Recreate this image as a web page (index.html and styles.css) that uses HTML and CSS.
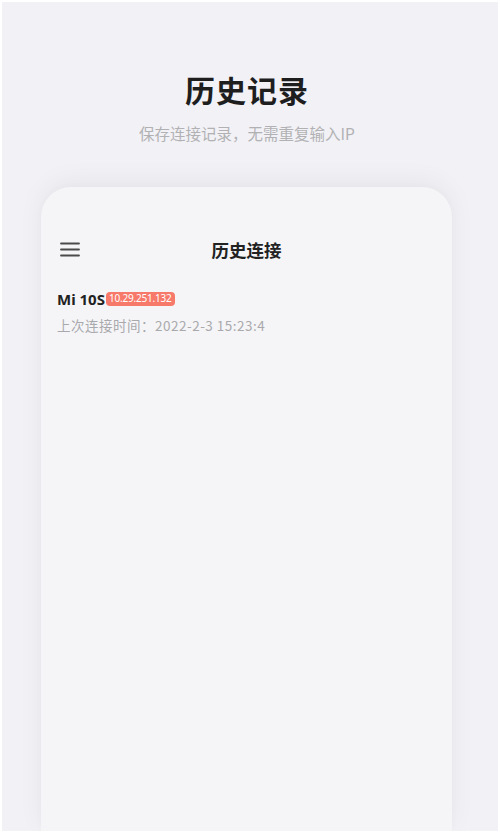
FILE: index.html
```html
<!DOCTYPE html>
<html lang="zh-CN">
<head>
<meta charset="utf-8">
<title>历史记录</title>
<link rel="stylesheet" href="styles.css">
</head>
<body>
<div class="screen">
  <header class="hero">
    <h1 class="hero-title">历史记录</h1>
    <p class="hero-sub">保存连接记录，无需重复输入IP</p>
  </header>
  <section class="card">
    <div class="toolbar">
      <svg class="menu" width="20" height="16" viewBox="0 0 20 16" aria-hidden="true">
        <path d="M1 2.5H19M1 8.5H19M1 14.5H19" stroke="#4a4a4a" stroke-width="1.8" stroke-linecap="round" fill="none"/>
      </svg>
      <div class="toolbar-title">历史连接</div>
    </div>
    <div class="item">
      <div class="item-head">
        <span class="device">Mi 10S</span>
        <span class="ip">10.29.251.132</span>
      </div>
      <div class="item-time">上次连接时间：2022-2-3 15:23:4</div>
    </div>
  </section>
</div>
</body>
</html>
```

FILE: styles.css
```css
* { box-sizing: border-box; }
html, body { margin: 0; padding: 0; }
body {
  background: #ffffff;
  font-family: "Noto Sans CJK SC", "Noto Sans", sans-serif;
}
.screen {
  width: 500px;
  height: 833px;
  border: 2px solid #ffffff;
  background: #f2f1f6;
  display: flex;
  flex-direction: column;
  align-items: center;
  overflow: hidden;
}
.hero {
  text-align: center;
  padding-top: 67px;
  margin-left: -6px;
}
.hero-title {
  margin: 0;
  font-size: 30px;
  line-height: 40px;
  font-weight: 700;
  color: #1e1e1e;
  letter-spacing: 1px;
}
.hero-sub {
  margin: 13px 0 0;
  font-size: 15.5px;
  line-height: 22px;
  color: #b1b1b4;
}
.card {
  margin-top: 43px;
  width: 411px;
  margin-left: -7px;
  flex: 1;
  background: #f5f5f7;
  border-radius: 30px 30px 0 0;
  box-shadow: 0 -6px 26px rgba(0, 0, 0, 0.05), 0 0 10px rgba(0, 0, 0, 0.02);
  padding: 0 16px;
}
.toolbar {
  position: relative;
  height: 40px;
  margin-top: 42px;
  display: flex;
  align-items: center;
  justify-content: center;
}
.menu {
  position: absolute;
  left: 3px;
  top: 12px;
}
.toolbar-title {
  font-size: 17.5px;
  font-weight: 700;
  color: #222;
}
.item {
  margin-top: 20px;
}
.item-head {
  display: flex;
  align-items: center;
  height: 20px;
}
.device {
  font-size: 15px;
  font-weight: 700;
  color: #222;
  font-family: "Noto Sans", "Noto Sans CJK SC", sans-serif;
}
.ip {
  margin-left: 1px;
  background: #f7796a;
  color: #fff;
  font-size: 10px;
  line-height: 13px;
  height: 14px;
  padding: 0 3px;
  border-radius: 4px;
  font-family: "Noto Sans", sans-serif;
  letter-spacing: -0.2px;
}
.item-time {
  margin-top: 6px;
  font-size: 13.5px;
  line-height: 20px;
  color: #a9a9ad;
  letter-spacing: 0.5px;
}
```
